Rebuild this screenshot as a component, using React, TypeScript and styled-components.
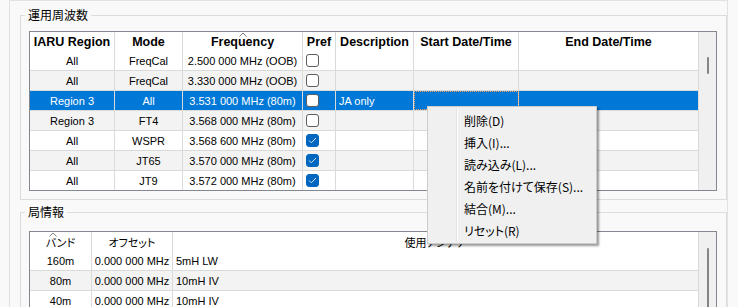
import styled, { createGlobalStyle } from 'styled-components';

const GlobalStyle = createGlobalStyle`
  html, body {
    margin: 0;
    padding: 0;
    background: #f9f9f9;
  }
  body {
    font-family: 'Liberation Sans', 'Noto Sans CJK JP', sans-serif;
    color: #000;
  }
`;

const Screen = styled.div`
  position: relative;
  width: 738px;
  height: 307px;
  overflow: hidden;
  box-sizing: border-box;
  padding-left: 9px;
  background: #f9f9f9;
`;

const TabBody = styled.div`
  width: 719px;
  box-sizing: border-box;
  border: 1px solid #e2e2e2;
  border-bottom: none;
  padding: 6px 0 0 10px;
  display: flex;
  flex-direction: column;
  gap: 4px;
`;

type GroupProps = {
  $padTop: number;
};
const Group = styled.fieldset<GroupProps>`
  margin: 0;
  min-width: 0;
  border: 1px solid #dcdcdc;
  padding: ${(props) => props.$padTop}px 9px 8px 8px;
`;

const GroupTitle = styled.legend`
  margin-left: -4px;
  padding: 0 3px;
  font: 12px/16px 'Noto Sans CJK JP', sans-serif;
`;

const Table = styled.div`
  display: flex;
  border: 1px solid #828790;
  background: #fff;
`;

const Grid = styled.div`
  flex: 1;
  display: flex;
  flex-direction: column;
`;

type RowProps = {
  $cols: string;
  $bg?: string;
  $selected?: boolean;
};
const HeaderRow = styled.div<RowProps>`
  display: grid;
  grid-template-columns: ${(props) => props.$cols};
  height: 19px;
  background: #fff;
`;

const Row = styled.div<RowProps>`
  display: grid;
  grid-template-columns: ${(props) => props.$cols};
  height: 20px;
  box-sizing: border-box;
  border-bottom: 1px solid #dadada;
  background: ${(props) => (props.$selected ? '#0078d7' : props.$bg)};
  color: ${(props) => (props.$selected ? '#fff' : '#000')};

  &:last-child {
    height: 19px;
    border-bottom: none;
  }
`;

type CellProps = {
  $align?: 'left' | 'center';
  $focus?: boolean;
};
const Cell = styled.div<CellProps>`
  box-sizing: border-box;
  border-right: 1px solid #dadada;
  display: flex;
  align-items: center;
  justify-content: ${(props) => (props.$align === 'left' ? 'flex-start' : 'center')};
  padding: 0 3px;
  font-size: 11px;
  white-space: nowrap;
  overflow: hidden;
  outline: ${(props) => (props.$focus ? '1px dotted #f4a460' : 'none')};
  outline-offset: -1px;
`;

const HeaderCell = styled(Cell)`
  position: relative;
  font-size: 12.5px;
  font-weight: bold;
  overflow: visible;
`;

const JpHeaderCell = styled(HeaderCell)`
  font: 11px 'Noto Sans CJK JP', sans-serif;
  font-feature-settings: 'palt';
`;

type ArrowProps = { $left?: number };
const SortArrow = styled.svg<ArrowProps>`
  position: absolute;
  top: 0;
  left: ${(props) => (props.$left !== undefined ? `${props.$left}px` : 'calc(50% - 4px)')};
  width: 8px;
  height: 5px;
`;

const Check = styled.span<{ $checked: boolean }>`
  width: 13px;
  height: 13px;
  box-sizing: border-box;
  border-radius: 3px;
  border: 1px solid ${(props) => (props.$checked ? '#0067c0' : '#5d5d5d')};
  background: ${(props) => (props.$checked ? '#0067c0' : '#fff')};
  display: flex;
  align-items: center;
  justify-content: center;
`;

type TrackProps = { $thumbTop: number };
const ScrollTrack = styled.div<TrackProps>`
  width: 17px;
  flex: none;
  box-sizing: border-box;
  background: #f0f0f0;
  display: flex;
  justify-content: center;
  padding-top: ${(props) => props.$thumbTop}px;
`;

const Thumb = styled.div<{ $h: number }>`
  width: 2px;
  height: ${(props) => props.$h}px;
  background: #858585;
  border-radius: 1px;
`;

const Menu = styled.div`
  position: absolute;
  left: 427px;
  top: 106px;
  width: 170px;
  box-sizing: border-box;
  display: flex;
  padding: 2px;
  background: #f0f0f0;
  border: 1px solid #cccccc;
  box-shadow: 2px 2px 2px rgba(0, 0, 0, 0.4);
`;

const Gutter = styled.div`
  width: 26px;
  flex: none;
  border-right: 1px solid #e2e3e3;
  box-shadow: 1px 0 0 #fff;
`;

const MenuList = styled.div`
  flex: 1;
  display: flex;
  flex-direction: column;
`;

const MenuItem = styled.div`
  height: 22px;
  display: flex;
  align-items: center;
  padding-left: 7px;
  font: 12px 'Noto Sans CJK JP', sans-serif;
  font-feature-settings: 'palt';
  white-space: nowrap;
`;

const freqCols = '85px 68px 120px 33px 78px 105px 180px';
const stationCols = '62px 81px 526px';

const freqRows = [
  { region: 'All', mode: 'FreqCal', freq: '2.500 000 MHz (OOB)', pref: false, desc: '' },
  { region: 'All', mode: 'FreqCal', freq: '3.330 000 MHz (OOB)', pref: false, desc: '' },
  { region: 'Region 3', mode: 'All', freq: '3.531 000 MHz (80m)', pref: false, desc: 'JA only', selected: true },
  { region: 'Region 3', mode: 'FT4', freq: '3.568 000 MHz (80m)', pref: false, desc: '' },
  { region: 'All', mode: 'WSPR', freq: '3.568 600 MHz (80m)', pref: true, desc: '' },
  { region: 'All', mode: 'JT65', freq: '3.570 000 MHz (80m)', pref: true, desc: '' },
  { region: 'All', mode: 'JT9', freq: '3.572 000 MHz (80m)', pref: true, desc: '' },
];

const stationRows = [
  { band: '160m', offset: '0.000 000 MHz', antenna: '5mH LW' },
  { band: '80m', offset: '0.000 000 MHz', antenna: '10mH IV' },
  { band: '40m', offset: '0.000 000 MHz', antenna: '10mH IV' },
];

const menuItems = ['削除(D)', '挿入(I)...', '読み込み(L)...', '名前を付けて保存(S)...', '結合(M)...', 'リセット(R)'];

function Arrow({ left }: { left?: number }) {
  return (
    <SortArrow $left={left} viewBox='0 0 8 5'>
      <polyline points='0.5,4.5 4,1 7.5,4.5' fill='none' stroke='#7d7d7d' strokeWidth='1' />
    </SortArrow>
  );
}

function CheckBox({ checked }: { checked: boolean }) {
  return (
    <Check $checked={checked}>
      {checked && (
        <svg width='9' height='7' viewBox='0 0 9 7'>
          <polyline points='1,3.5 3.3,5.8 8,1' fill='none' stroke='#cfe3f7' strokeWidth='1' />
        </svg>
      )}
    </Check>
  );
}

export default function App() {
  return (
    <Screen>
      <GlobalStyle />
      <TabBody>
        <Group $padTop={8}>
          <GroupTitle>運用周波数</GroupTitle>
          <Table>
            <Grid>
              <HeaderRow $cols={freqCols}>
                <HeaderCell>IARU Region</HeaderCell>
                <HeaderCell>Mode</HeaderCell>
                <HeaderCell>
                  <Arrow />
                  Frequency
                </HeaderCell>
                <HeaderCell>Pref</HeaderCell>
                <HeaderCell>Description</HeaderCell>
                <HeaderCell>Start Date/Time</HeaderCell>
                <HeaderCell>End Date/Time</HeaderCell>
              </HeaderRow>
              {freqRows.map((r, i) => (
                <Row
                  key={i}
                  $cols={freqCols}
                  $bg={i % 2 === 1 ? '#f3f3f3' : '#fff'}
                  $selected={r.selected}
                >
                  <Cell>{r.region}</Cell>
                  <Cell>{r.mode}</Cell>
                  <Cell>{r.freq}</Cell>
                  <Cell $align='left'>
                    <CheckBox checked={r.pref} />
                  </Cell>
                  <Cell $align='left'>{r.desc}</Cell>
                  <Cell $focus={r.selected} />
                  <Cell />
                </Row>
              ))}
            </Grid>
            <ScrollTrack $thumbTop={25}>
              <Thumb $h={17} />
            </ScrollTrack>
          </Table>
        </Group>

        <Group $padTop={11}>
          <GroupTitle>局情報</GroupTitle>
          <Table>
            <Grid>
              <HeaderRow $cols={stationCols}>
                <JpHeaderCell>
                  <Arrow left={19} />
                  バンド
                </JpHeaderCell>
                <JpHeaderCell>オフセット</JpHeaderCell>
                <JpHeaderCell>使用アンテナ</JpHeaderCell>
              </HeaderRow>
              {stationRows.map((r, i) => (
                <Row key={i} $cols={stationCols} $bg={i % 2 === 1 ? '#f3f3f3' : '#fff'}>
                  <Cell>{r.band}</Cell>
                  <Cell>{r.offset}</Cell>
                  <Cell $align='left'>{r.antenna}</Cell>
                </Row>
              ))}
            </Grid>
            <ScrollTrack $thumbTop={16}>
              <Thumb $h={100} />
            </ScrollTrack>
          </Table>
        </Group>
      </TabBody>

      <Menu>
        <Gutter />
        <MenuList>
          {menuItems.map((item) => (
            <MenuItem key={item}>{item}</MenuItem>
          ))}
        </MenuList>
      </Menu>
    </Screen>
  );
}
